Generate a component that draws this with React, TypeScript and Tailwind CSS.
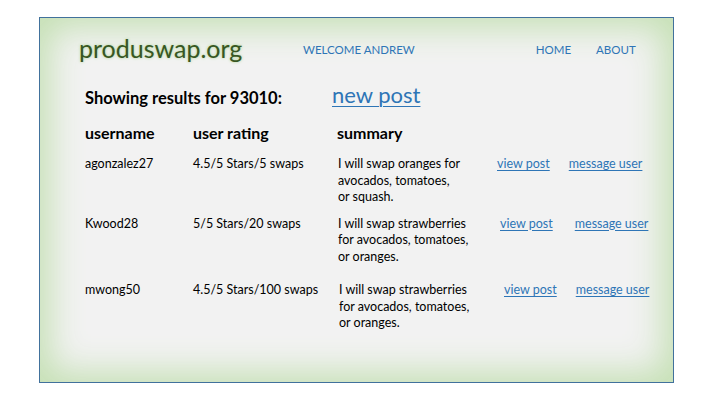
import React from 'react';

interface Post {
  user: string;
  rating: string;
  summary: string[];
  gapTop: string;
  summaryShift: string;
  viewShift: string;
  msgShift: string;
}

const posts: Post[] = [
  {
    user: 'agonzalez27',
    rating: '4.5/5 Stars/5 swaps',
    summary: ['I will swap oranges for', 'avocados, tomatoes,', 'or squash.'],
    gapTop: 'mt-[12px]',
    summaryShift: 'pl-[1px]',
    viewShift: 'pl-0',
    msgShift: 'ml-[19px]',
  },
  {
    user: 'Kwood28',
    rating: '5/5 Stars/20 swaps',
    summary: ['I will swap strawberries', 'for avocados, tomatoes,', 'or oranges.'],
    gapTop: 'mt-[10px]',
    summaryShift: 'pl-[1px]',
    viewShift: 'pl-[3px]',
    msgShift: 'ml-[22px]',
  },
  {
    user: 'mwong50',
    rating: '4.5/5 Stars/100 swaps',
    summary: ['I will swap strawberries', 'for avocados, tomatoes,', 'or oranges.'],
    gapTop: 'mt-[17px]',
    summaryShift: 'pl-[2px]',
    viewShift: 'pl-[7px]',
    msgShift: 'ml-[19px]',
  },
];

export default function App() {
  return (
    <div className="w-[720px] h-[405px] bg-white pt-[17px] pl-[39px] font-['Lato','Liberation_Sans',sans-serif] text-black">
      <div className="w-[635px] h-[366px] border border-[#41719c] bg-[#f2f2f2] shadow-[inset_0_0_34px_10px_#c5e0b4]">
        {/* Header */}
        <div className="flex items-center pt-[14px] pl-[39px]">
          <span className="w-[224px] text-[25px] leading-[32px] text-[#385723] [text-shadow:0_0_3px_#a9d18e]">
            produswap.org
          </span>
          <span className="mt-[4px] text-[11.5px] text-[#2e75b6]">WELCOME ANDREW</span>
          <span className="ml-[121px] mt-[4px] text-[11.5px] text-[#2e75b6]">HOME</span>
          <span className="ml-[25px] mt-[4px] text-[11.5px] text-[#2e75b6]">ABOUT</span>
        </div>

        <div className="pl-[45px]">
          {/* Search summary */}
          <div className="flex items-end mt-[17px]">
            <span className="w-[247px] text-[16.5px] font-bold leading-[24px]">Showing results for 93010:</span>
            <a href="#" className="mb-[1px] text-[22px] leading-[28px] text-[#2e75b6] underline underline-offset-[3px] decoration-1">
              new post
            </a>
          </div>

          {/* Column headings */}
          <div className="flex mt-[12px] text-[16px] font-bold leading-[22px]">
            <span className="w-[108px]">username</span>
            <span className="w-[144px]">user rating</span>
            <span>summary</span>
          </div>

          {/* Results */}
          {posts.map((p) => (
            <div key={p.user} className={`flex text-[12.5px] leading-[16.5px] ${p.gapTop}`}>
              <span className="w-[108px]">{p.user}</span>
              <span className="w-[144px]">{p.rating}</span>
              <div className={`w-[160px] ${p.summaryShift}`}>
                {p.summary.map((line) => (
                  <div key={line}>{line}</div>
                ))}
              </div>
              <div className={`flex items-start ${p.viewShift}`}>
                <a href="#" className="text-[#2e75b6] underline underline-offset-2">view post</a>
                <a href="#" className={`text-[#2e75b6] underline underline-offset-2 ${p.msgShift}`}>message user</a>
              </div>
            </div>
          ))}
        </div>
      </div>
    </div>
  );
}
